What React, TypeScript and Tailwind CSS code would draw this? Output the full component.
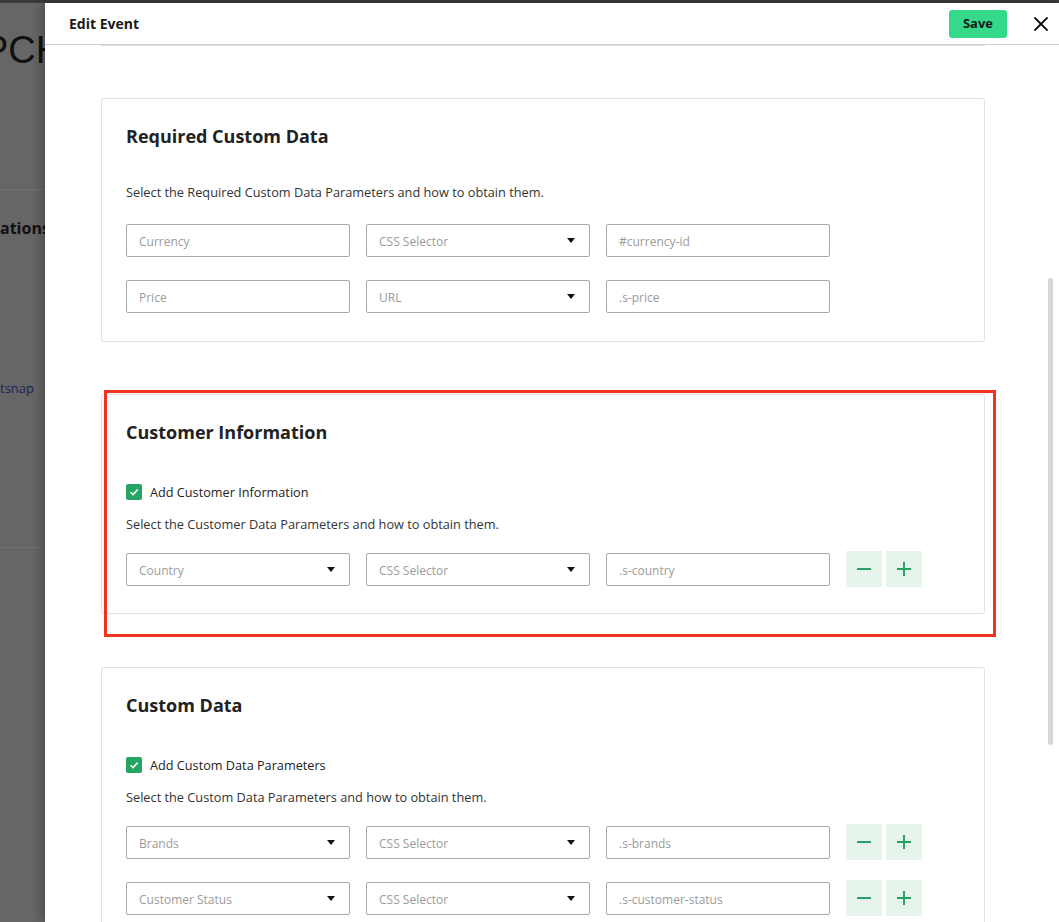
import { X } from 'lucide-react';

type Field = { label: string; kind: 'input' | 'select' };

function Box({ field }: { field: Field }) {
  return (
    <div className="w-[224px] h-[33px] border border-[#a9a9a9] rounded-[2px] pl-3 pr-[14px] pt-[3px] flex items-center justify-between text-[12px] text-[#9b9b9b]">
      <span>{field.label}</span>
      {field.kind === 'select' && (
        <svg width="8" height="5" viewBox="0 0 8 5" className="-mt-[3px]">
          <polygon points="0,0 8,0 4,5" fill="#111" />
        </svg>
      )}
    </div>
  );
}

function Row({ fields, actions }: { fields: Field[]; actions?: boolean }) {
  return (
    <div className="h-9 flex items-center gap-4">
      {fields.map((f, i) => (
        <Box key={i} field={f} />
      ))}
      {actions && (
        <div className="flex gap-1">
          <button className="w-9 h-9 bg-[#e6f4ec] flex items-center justify-center">
            <svg width="14" height="14" viewBox="0 0 14 14">
              <line x1="0" y1="7" x2="14" y2="7" stroke="#28a262" strokeWidth="2" />
            </svg>
          </button>
          <button className="w-9 h-9 bg-[#e6f4ec] flex items-center justify-center">
            <svg width="14" height="14" viewBox="0 0 14 14">
              <line x1="0" y1="7" x2="14" y2="7" stroke="#28a262" strokeWidth="2" />
              <line x1="7" y1="0" x2="7" y2="14" stroke="#28a262" strokeWidth="2" />
            </svg>
          </button>
        </div>
      )}
    </div>
  );
}

function Checkbox({ label }: { label: string }) {
  return (
    <div className="mt-[39px] h-[18px] flex items-center gap-2">
      <div className="w-4 h-4 rounded-[2px] bg-[#24a662] flex items-center justify-center">
        <svg width="12" height="12" viewBox="0 0 12 12">
          <polyline points="2.5,6.2 5,8.6 9.8,3.4" fill="none" stroke="#fff" strokeWidth="1.5" />
        </svg>
      </div>
      <span className="text-[12.7px] leading-[18px] text-[#222]">{label}</span>
    </div>
  );
}

function Backdrop() {
  return (
    <div className="w-[45px] shrink-0 overflow-hidden bg-[#666] flex flex-col text-[#111]">
      <div className="mt-[28px] ml-[-17px] whitespace-nowrap font-['Liberation_Sans',Arial,sans-serif] text-[38px] leading-[38px]">
        PCH
      </div>
      <div className="mt-[120px] h-px bg-[#707070]" />
      <div className="mt-[27px] whitespace-nowrap text-[16px] leading-[22px] font-bold">ations</div>
      <div className="mt-[140px] whitespace-nowrap text-[13px] leading-[18px] text-[#221f55]">tsnap</div>
      <div className="mt-[150px] h-px bg-[#707070]" />
    </div>
  );
}

export default function App() {
  return (
    <div className="w-[1059px] h-[922px] overflow-hidden flex flex-col bg-[#666] font-['Open_Sans',sans-serif]">
      <div className="h-[3px] shrink-0 bg-[#3a3a3a]" />
      <div className="flex flex-1 min-h-0">
        <Backdrop />
        <div className="relative flex-1 bg-white flex flex-col min-h-0 shadow-[-4px_0_10px_rgba(0,0,0,0.25)]">
          <div className="h-[42px] shrink-0 border-b border-[#cfcfcf] flex items-center justify-between pl-6 pr-[6px]">
            <span className="text-[14px] font-bold text-[#1a1a1a]">Edit Event</span>
            <div className="flex items-center gap-[22px]">
              <button className="w-[58px] h-[28px] rounded-[3px] bg-[#34d98a] text-[13px] font-bold text-[#1a1a1a] flex items-center justify-center">
                Save
              </button>
              <X size={24} strokeWidth={1.8} className="text-[#111]" />
            </div>
          </div>

          <div className="flex flex-1 min-h-0 overflow-hidden">
            <div className="flex-1 pl-[56px] pr-[62px] flex flex-col">
              <div className="h-px shrink-0 bg-[#dcdcdc]" />

              <div className="mt-[52px] shrink-0 border border-[#e1e1e1] rounded-[3px] px-6 pt-[25px] pb-[27px]">
                <h2 className="text-[18px] leading-6 font-bold text-[#222]">Required Custom Data</h2>
                <p className="mt-[35px] text-[12.75px] leading-[18px] text-[#333]">
                  Select the Required Custom Data Parameters and how to obtain them.
                </p>
                <div className="mt-[21px] flex flex-col gap-5">
                  <Row
                    fields={[
                      { label: 'Currency', kind: 'input' },
                      { label: 'CSS Selector', kind: 'select' },
                      { label: '#currency-id', kind: 'input' },
                    ]}
                  />
                  <Row
                    fields={[
                      { label: 'Price', kind: 'input' },
                      { label: 'URL', kind: 'select' },
                      { label: '.s-price', kind: 'input' },
                    ]}
                  />
                </div>
              </div>

              <div className="relative mt-[52px] shrink-0">
                <div className="border border-[#e1e1e1] rounded-[3px] px-6 pt-[25px] pb-[26px]">
                  <h2 className="text-[18px] leading-6 font-bold text-[#222]">Customer Information</h2>
                  <Checkbox label="Add Customer Information" />
                  <p className="mt-[14px] text-[12.75px] leading-[18px] text-[#333]">
                    Select the Customer Data Parameters and how to obtain them.
                  </p>
                  <div className="mt-[18px]">
                    <Row
                      actions
                      fields={[
                        { label: 'Country', kind: 'select' },
                        { label: 'CSS Selector', kind: 'select' },
                        { label: '.s-country', kind: 'input' },
                      ]}
                    />
                  </div>
                </div>
                {/* annotation outline */}
                <div className="absolute -top-[4px] left-[3px] -right-[11px] -bottom-[23px] border-[3px] border-[#f4331f] pointer-events-none" />
              </div>

              <div className="mt-[53px] shrink-0 border border-[#e1e1e1] rounded-[3px] px-6 pt-[25px] pb-[26px]">
                <h2 className="text-[18px] leading-6 font-bold text-[#222]">Custom Data</h2>
                <Checkbox label="Add Custom Data Parameters" />
                <p className="mt-[14px] text-[12.75px] leading-[18px] text-[#333]">
                  Select the Custom Data Parameters and how to obtain them.
                </p>
                <div className="mt-[18px] flex flex-col gap-5">
                  <Row
                    actions
                    fields={[
                      { label: 'Brands', kind: 'select' },
                      { label: 'CSS Selector', kind: 'select' },
                      { label: '.s-brands', kind: 'input' },
                    ]}
                  />
                  <Row
                    actions
                    fields={[
                      { label: 'Customer Status', kind: 'select' },
                      { label: 'CSS Selector', kind: 'select' },
                      { label: '.s-customer-status', kind: 'input' },
                    ]}
                  />
                </div>
              </div>
            </div>

            <div className="w-[12px] shrink-0">
              <div className="mt-[233px] ml-[1px] w-[5px] h-[467px] rounded-full bg-[#d6d6d6]" />
            </div>
          </div>
        </div>
      </div>
    </div>
  );
}
